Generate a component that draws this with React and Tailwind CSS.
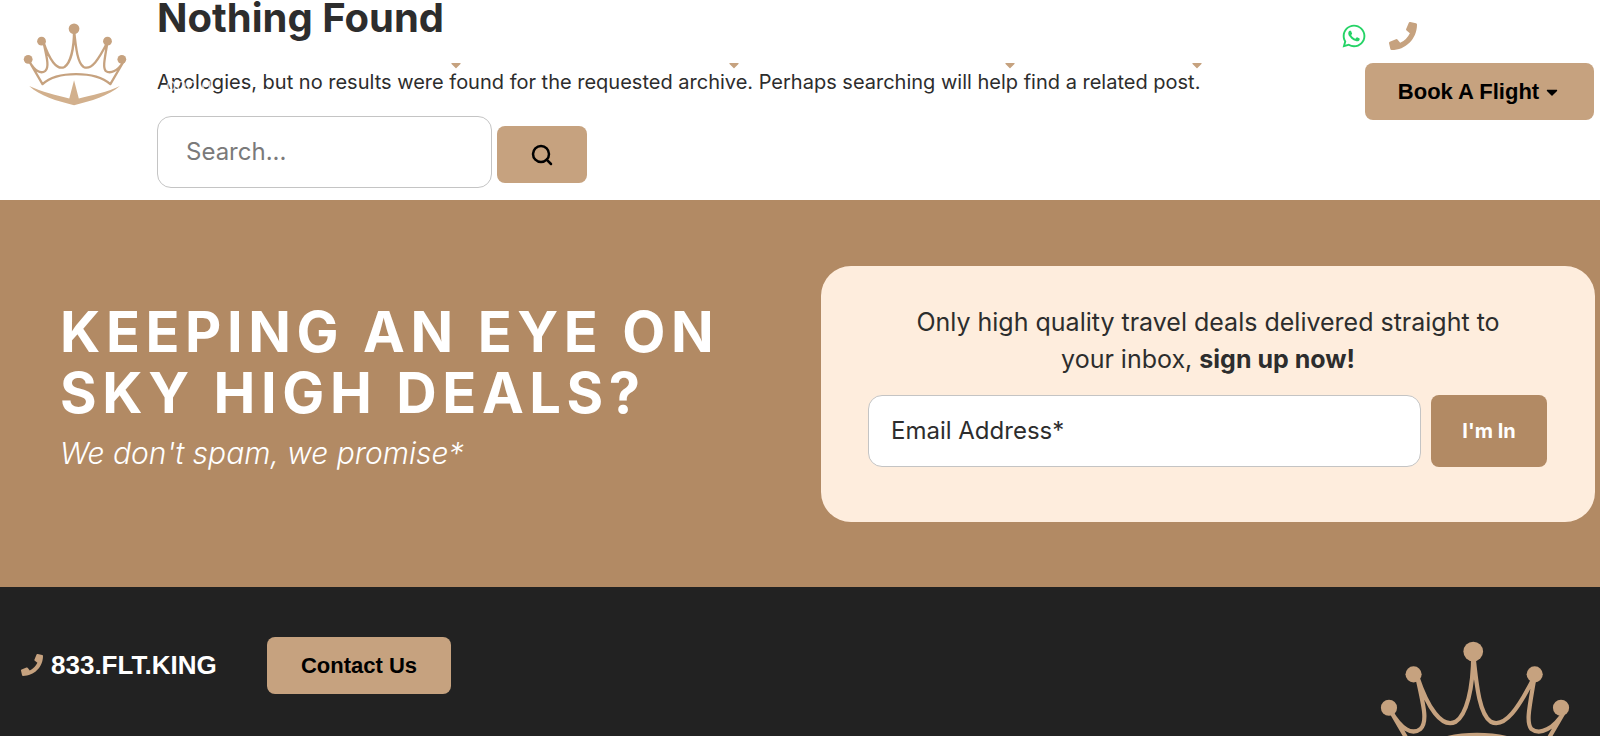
import React from 'react';
import { Search } from 'lucide-react';
import { FaWhatsapp, FaPhoneAlt, FaCaretDown } from 'react-icons/fa';

// crown used in the header and, bigger, in the footer
const Crown = ({ className }) => (
  <svg viewBox="0 0 110 90" className={className} fill="none">
    <g stroke="#c6a27f" strokeWidth="2.4" strokeLinejoin="round" strokeLinecap="round">
      <path d="M5 40 L19 64 C34 50 74 50 90 64 L104 40 C98 50 90 54 85 50 C82 46 84 38 87 20 C78 38 70 50 62 46 C56 42 54 28 52 7 C52 28 48 42 42 46 C34 50 26 38 20 20 C24 38 26 46 22 50 C17 54 11 50 5 40 Z" transform="translate(2 0)" />
    </g>
    <circle cx="54" cy="6" r="5.6" fill="#c6a27f" />
    <circle cx="20" cy="19" r="4.6" fill="#c6a27f" />
    <circle cx="89" cy="19" r="4.6" fill="#c6a27f" />
    <circle cx="6" cy="38" r="4.6" fill="#c6a27f" />
    <circle cx="104" cy="38" r="4.6" fill="#c6a27f" />
    <path d="M7 66 C20 72 36 76 49 79 L54 60 L59 79 C72 76 90 72 102 66 C90 76 72 82 54 86 C36 82 18 76 7 66 Z" fill="#d2b08d" />
  </svg>
);

const NAV_CARETS = ['left-[448px]', 'left-[726px]', 'left-[1002px]', 'left-[1189px]'];

const Header = () => (
  <div className="absolute inset-x-0 top-0 h-[130px]">
    <Crown className="absolute left-[22px] top-[23px] w-[106px] h-[86px]" />
    {/* white nav label sitting over the page text */}
    <span className="absolute left-[166px] top-[73px] text-[17px] leading-6 text-white font-['Inter',sans-serif] opacity-80">ooo ɡ</span>
    {NAV_CARETS.map((pos) => (
      <FaCaretDown key={pos} className={`absolute top-[57px] w-[16px] h-[16px] text-[#c6a27f] ${pos}`} />
    ))}
    <div className="absolute right-[6px] top-[22px] flex flex-col items-end">
      <div className="flex items-center gap-[22px] mr-[177px]">
        <FaWhatsapp className="w-[26px] h-[26px] text-[#25d366]" />
        <FaPhoneAlt className="w-[28px] h-[28px] text-[#c6a27f] -scale-x-100" />
      </div>
      <button className="mt-[13px] flex items-center justify-center gap-[4px] w-[229px] h-[57px] rounded-lg bg-[#c6a27f] text-black text-[22px] font-bold font-['Liberation_Sans',sans-serif]">
        Book A Flight
        <FaCaretDown className="w-[18px] h-[18px]" />
      </button>
    </div>
  </div>
);

const App = () => (
  <div className="relative w-[1600px] h-[736px] overflow-hidden bg-white font-['Inter',sans-serif] text-[#2d2d2d]">
    <section className="h-[200px] pl-[157px] bg-white overflow-hidden">
      <h1 className="-mt-[3px] text-[40px] leading-[42px] font-bold">Nothing Found</h1>
      <p className="mt-[29px] text-[20px] leading-[28px]">
        Apologies, but no results were found for the requested archive. Perhaps searching will help find a related post.
      </p>
      <div className="mt-[20px] flex items-start gap-[5px]">
        <div className="w-[335px] h-[72px] flex items-center pl-[28px] rounded-[14px] border border-[#c4c4c4] text-[24px] text-[#7a7a7a]">
          Search...
        </div>
        <button className="mt-[10px] w-[90px] h-[57px] flex items-center justify-center rounded-lg bg-[#c6a27f] text-black">
          <Search className="w-[24px] h-[24px]" strokeWidth={2.5} />
        </button>
      </div>
    </section>

    <section className="h-[387px] bg-[#b28a64] flex items-start">
      <div className="w-[821px] pl-[60px] pt-[102px]">
        <h2 className="text-[56px] leading-[61px] font-bold tracking-[0.1em] text-white">
          KEEPING AN EYE ON<br />SKY HIGH DEALS?
        </h2>
        <p className="mt-[9px] text-[30px] leading-[40px] italic font-light text-white">We don't spam, we promise*</p>
      </div>
      <div className="mt-[66px] w-[774px] h-[256px] rounded-[30px] bg-[#feeddd] px-[47px] pt-[38px]">
        <p className="text-center text-[25px] leading-[37px]">
          Only high quality travel deals delivered straight to<br />
          your inbox, <b className="font-bold">sign up now!</b>
        </p>
        <div className="mt-[17px] flex gap-[10px]">
          <div className="w-[553px] h-[72px] flex items-center pl-[22px] rounded-[14px] border border-[#c4c4c4] bg-white text-[24px]">
            Email Address*
          </div>
          <button className="w-[116px] h-[72px] rounded-lg bg-[#b28a64] text-white text-[20px] font-bold">I'm In</button>
        </div>
      </div>
    </section>

    <footer className="relative h-[149px] bg-[#222222] pl-[21px] pt-[50px]">
      <div className="flex items-start">
        <div className="flex items-center gap-[8px] pt-[10px] w-[246px] font-['Liberation_Sans',sans-serif] text-[26px] leading-[36px] font-bold text-white">
          <FaPhoneAlt className="w-[22px] h-[22px] text-[#c6a27f] -scale-x-100" />
          833.FLT.KING
        </div>
        <button className="w-[184px] h-[57px] rounded-lg bg-[#c6a27f] text-black text-[22px] font-bold font-['Liberation_Sans',sans-serif]">
          Contact Us
        </button>
      </div>
      <Crown className="absolute left-[1378px] top-[54px] w-[194px] h-[158px]" />
    </footer>

    <Header />
  </div>
);

export default App;
